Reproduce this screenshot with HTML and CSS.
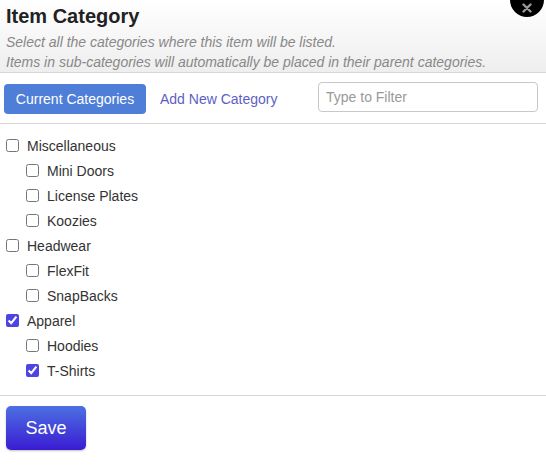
FILE: index.html
```
<!DOCTYPE html>
<html>
<head>
<meta charset="utf-8">
<link rel="stylesheet" href="styles.css">
</head>
<body>
<div class="dialog">
  <div class="close">
    <svg width="10" height="10" viewBox="0 0 10 10"><path d="M1.5 1.5L8.5 8.5M8.5 1.5L1.5 8.5" stroke="#9a9a9a" stroke-width="2.4" stroke-linecap="round"/></svg>
  </div>
  <div class="header">
    <h1 class="title">Item Category</h1>
    <p class="sub">Select all the categories where this item will be listed.<br>Items in sub-categories will automatically be placed in their parent categories.</p>
  </div>
  <div class="tabs">
    <button class="tab-active">Current Categories</button>
    <a class="tab-link">Add New Category</a>
    <input class="filter" type="text" placeholder="Type to Filter">
  </div>
  <div class="list">
    <label class="row"><input type="checkbox" class="cb">Miscellaneous</label>
    <label class="row child"><input type="checkbox" class="cb">Mini Doors</label>
    <label class="row child"><input type="checkbox" class="cb">License Plates</label>
    <label class="row child"><input type="checkbox" class="cb">Koozies</label>
    <label class="row"><input type="checkbox" class="cb">Headwear</label>
    <label class="row child"><input type="checkbox" class="cb">FlexFit</label>
    <label class="row child"><input type="checkbox" class="cb">SnapBacks</label>
    <label class="row"><input type="checkbox" class="cb" checked>Apparel</label>
    <label class="row child"><input type="checkbox" class="cb">Hoodies</label>
    <label class="row child"><input type="checkbox" class="cb" checked>T-Shirts</label>
  </div>
  <div class="footer">
    <button class="save">Save</button>
  </div>
</div>
</body>
</html>
```
FILE: styles.css
```
html, body {
  margin: 0;
  padding: 0;
  background: #fff;
}
body {
  font-family: "Liberation Sans", Arial, sans-serif;
  color: #333;
}
.dialog {
  position: relative;
  width: 546px;
  height: 468px;
  overflow: hidden;
}
.close {
  position: absolute;
  left: 510px;
  top: -17px;
  width: 34px;
  height: 34px;
  border-radius: 50%;
  background: #000;
  display: flex;
  justify-content: center;
  align-items: flex-end;
  box-sizing: border-box;
}
.close svg {
  display: block;
  margin-bottom: 4px;
}
.header {
  height: 73px;
  box-sizing: border-box;
  padding: 4px 6px 0 6px;
  background: linear-gradient(#ffffff, #eeeeee);
  border-bottom: 1px solid #d8d8d8;
}
.title {
  margin: 0;
  font-size: 20px;
  line-height: 24px;
  font-weight: bold;
  color: #222;
}
.sub {
  margin: 4px 0 0 0;
  font-size: 14px;
  line-height: 20px;
  font-style: italic;
  color: #888;
}
.tabs {
  height: 51px;
  box-sizing: border-box;
  display: flex;
  align-items: flex-start;
  padding: 0 8px 0 4px;
  border-bottom: 1px solid #d8d8d8;
}
.tab-active {
  margin-top: 11px;
  height: 30px;
  width: 142px;
  padding: 0;
  border: none;
  border-radius: 4px;
  background: #4e7ed8;
  color: #fff;
  font-family: "Liberation Sans", Arial, sans-serif;
  font-size: 14px;
  line-height: 30px;
}
.tab-link {
  margin-top: 11px;
  margin-left: 14px;
  line-height: 30px;
  font-size: 14px;
  color: #5d5fc4;
}
.filter {
  margin-top: 9px;
  margin-left: auto;
  width: 220px;
  height: 30px;
  box-sizing: border-box;
  border: 1px solid #c8c8c8;
  border-radius: 4px;
  padding: 0 7px;
  font-family: "Liberation Sans", Arial, sans-serif;
  font-size: 14px;
  color: #333;
  outline: none;
}
.filter::placeholder {
  color: #999;
}
.list {
  padding: 9px 0 12px 0;
  border-bottom: 1px solid #d8d8d8;
}
.row {
  display: flex;
  align-items: center;
  height: 25px;
  font-size: 14px;
  color: #333;
}
.cb {
  width: 13px;
  height: 13px;
  margin: 0 8px 0 6px;
  accent-color: #4d45e3;
}
.child .cb {
  margin-left: 26px;
}
.footer {
  padding: 10px 6px;
}
.save {
  width: 80px;
  height: 44px;
  border: none;
  border-radius: 5px;
  background: linear-gradient(#4c70e2, #3a1cd2);
  color: #fff;
  font-family: "Liberation Sans", Arial, sans-serif;
  font-size: 18px;
  padding: 0;
  box-shadow: 0 1px 2px rgba(0,0,0,0.25);
}
```
